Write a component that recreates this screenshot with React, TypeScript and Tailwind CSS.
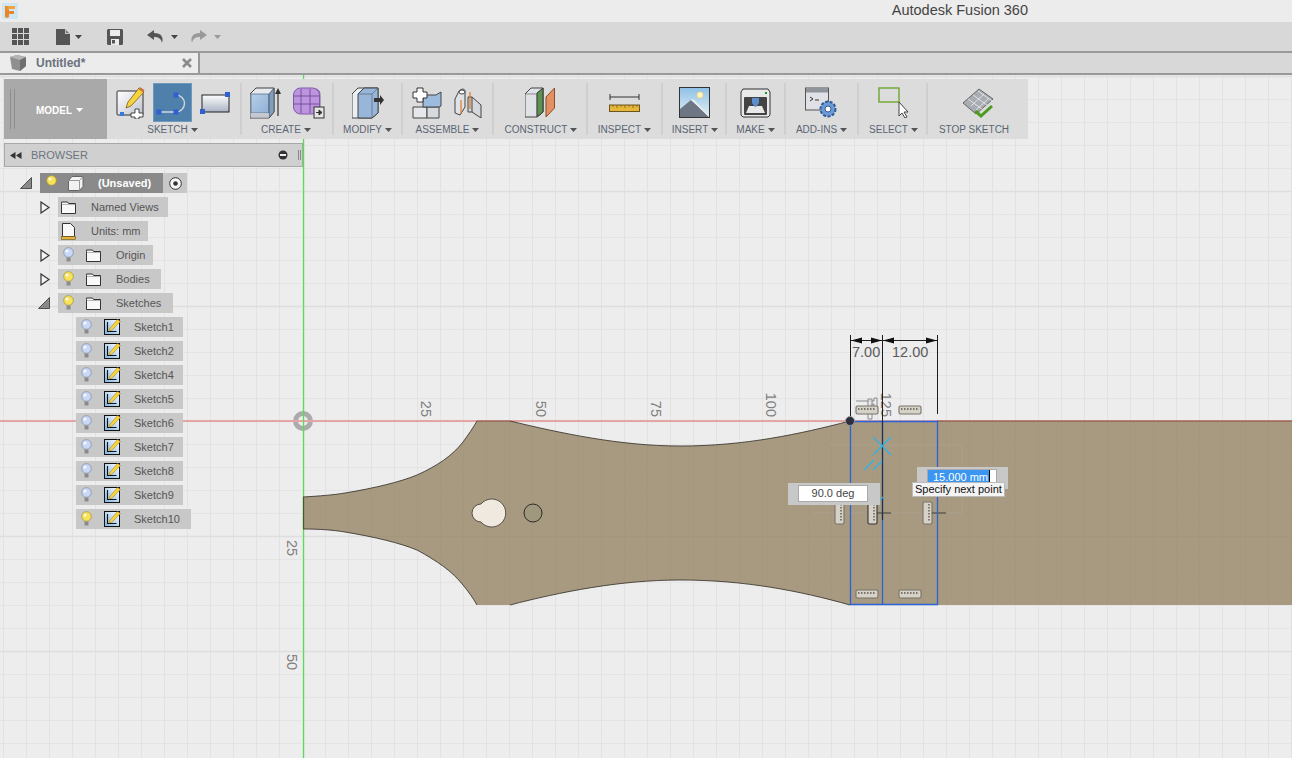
import type { ReactNode } from 'react'

const FONT = '"Liberation Sans", Arial, sans-serif'

function Caret({ color = '#555' }: { color?: string }) {
  return (
    <svg width="7" height="4" viewBox="0 0 7 4" className="inline-block shrink-0">
      <polygon points="0,0 7,0 3.5,4" fill={color} />
    </svg>
  )
}

function FusionLogo() {
  return (
    <svg width="16" height="16" viewBox="0 0 16 16">
      <rect width="16" height="16" fill="#cfe6f2" />
      <path d="M3 3h10v3H7v2h5v3H7v3l-2 1-2-1z" fill="#e8862a" />
      <path d="M5 6h8V3H6z" fill="#f2a13f" />
    </svg>
  )
}

function AppsIcon() {
  return (
    <svg width="17" height="17" viewBox="0 0 17 17" fill="#555">
      {[0, 6, 12].map((x) =>
        [0, 6, 12].map((y) => <rect key={`${x}-${y}`} x={x} y={y} width="5" height="5" />),
      )}
    </svg>
  )
}

function FileIcon() {
  return (
    <svg width="14" height="16" viewBox="0 0 14 16">
      <path d="M0 0h9l5 5v11H0z" fill="#555" />
      <path d="M9 0v5h5z" fill="#d8d8d8" />
      <path d="M9.7 1 13 4.3H9.7z" fill="#777" />
    </svg>
  )
}

function SaveIcon() {
  return (
    <svg width="16" height="16" viewBox="0 0 16 16">
      <path d="M1 0h14l1 1v14l-1 1H1l-1-1V1z" fill="#555" />
      <rect x="3" y="1" width="10" height="6" fill="#ececec" />
      <rect x="4" y="10" width="8" height="6" fill="#ececec" />
      <rect x="5" y="11" width="3" height="3.5" fill="#555" />
    </svg>
  )
}

function UndoIcon({ color, flip }: { color: string; flip?: boolean }) {
  return (
    <svg width="17" height="13" viewBox="0 0 17 13" className={flip ? '-scale-x-100' : ''}>
      <path d="M7 0 0 5l7 5V7c4 0 7 1 8 6 2-6-1-10-8-10z" fill={color} />
    </svg>
  )
}

function CreateSketchIcon() {
  return (
    <svg width="29" height="32" viewBox="0 0 29 32">
      <defs>
        <linearGradient id="paper" x1="0" y1="0" x2="1" y2="1">
          <stop offset="0" stopColor="#ffffff" />
          <stop offset="1" stopColor="#bfc3cc" />
        </linearGradient>
      </defs>
      <rect x="1" y="4" width="26" height="24" rx="1" fill="url(#paper)" stroke="#333" />
      <polygon points="23,1 28,5 15,19 10,21 12,15" fill="#f6d23c" stroke="#7a5a20" strokeWidth="0.8" />
      <polygon points="24,0 28.5,3 27,5.5 22.5,2" fill="#c8763c" />
      <rect x="4" y="25" width="4" height="4" fill="#3a78d8" />
      <path d="M19 22h4v4h4v4h-4v2h-4v-2h-4v-4h4z" fill="#fff" stroke="#333" strokeWidth="0.9" />
    </svg>
  )
}

function ArcIcon() {
  return (
    <svg width="33" height="30" viewBox="0 0 33 30">
      <path d="M3 24H20M20 7A8.5 8.5 0 0 1 20 24" fill="none" stroke="#cfd6de" strokeWidth="1.4" />
      <rect x="0.5" y="21.5" width="5" height="5" fill="#2f5fd0" />
      <rect x="17.5" y="21.5" width="5" height="5" fill="#2f5fd0" />
      <rect x="17.5" y="4.5" width="5" height="5" fill="#2f5fd0" />
    </svg>
  )
}

function RectIcon() {
  return (
    <svg width="31" height="22" viewBox="0 0 31 22">
      <defs>
        <linearGradient id="rectfill" x1="0" y1="0" x2="0" y2="1">
          <stop offset="0" stopColor="#fdfdfd" />
          <stop offset="1" stopColor="#aab2c4" />
        </linearGradient>
      </defs>
      <rect x="2" y="3" width="27" height="17" fill="url(#rectfill)" stroke="#222" />
      <rect x="25" y="0" width="5" height="5" fill="#2f5fd0" />
      <rect x="0" y="17" width="5" height="5" fill="#2f5fd0" />
    </svg>
  )
}

function ExtrudeIcon() {
  return (
    <svg width="33" height="32" viewBox="0 0 33 32">
      <defs>
        <linearGradient id="blueface" x1="0" y1="0" x2="1" y2="1">
          <stop offset="0" stopColor="#b8cfe8" />
          <stop offset="1" stopColor="#8fb0d6" />
        </linearGradient>
      </defs>
      <path d="M0 7 6 1h18v24l-5 6H0z" fill="#e6e9ee" stroke="#444" />
      <path d="M1 7h18v19H1z" fill="url(#blueface)" stroke="#567" strokeWidth="0.7" />
      <path d="M19 7l5-6v24l-5 6z" fill="#7f9dc0" stroke="#444" strokeWidth="0.7" />
      <rect x="1" y="26" width="18" height="4.5" fill="#c5c9cf" />
      <path d="M28 29V6" stroke="#333" strokeWidth="1.2" />
      <polygon points="28,1 31,7 25,7" fill="#333" />
    </svg>
  )
}

function FormIcon() {
  return (
    <svg width="32" height="32" viewBox="0 0 32 32">
      <rect x="0.5" y="1" width="26" height="26" rx="7" fill="#bd95df" stroke="#8059a8" />
      <path d="M1 9h25M1 17h25M8 2v24M17 2v24" stroke="#6d4a96" strokeWidth="0.9" fill="none" />
      <path d="M23 2c4 1 4 4 4 8v10" stroke="#8059a8" fill="none" />
      <rect x="21" y="20" width="10" height="11" fill="#e5e5e5" stroke="#333" />
      <path d="M23 25.5h4M26 23l3 2.5-3 2.5z" fill="#333" stroke="#333" />
    </svg>
  )
}

function ModifyIcon() {
  return (
    <svg width="32" height="32" viewBox="0 0 32 32">
      <path d="M0 7 6 1h20v25l-6 5H0z" fill="#eceef2" stroke="#444" />
      <path d="M6 7 12 1h14v25l-6 5H6z" fill="#97b6da" stroke="#444" />
      <path d="M20 31V7l6-6" fill="none" stroke="#567" strokeWidth="0.7" />
      <path d="M6 7h14" stroke="#567" strokeWidth="0.7" />
      <path d="M22 11h6V8l4 5-4 5v-3h-6z" fill="#333" />
    </svg>
  )
}

function NewComponentIcon() {
  return (
    <svg width="31" height="32" viewBox="0 0 31 32">
      <path d="M1 20h14v11H1z" fill="#e5e7ea" stroke="#444" />
      <path d="M15 20h12v11H15z" fill="#d6d9dd" stroke="#444" />
      <path d="M11 8h13l5-3v14l-2 1H11z" fill="#9dbbdc" stroke="#444" />
      <path d="M5 1h6v4h4v6h-4v4H5v-4H1V5h4z" fill="#fff" stroke="#333" />
    </svg>
  )
}

function JointIcon() {
  return (
    <svg width="30" height="30" viewBox="0 0 30 30">
      <path d="M2 11 6 3c3-3 6-2 6 0v16l-5 8-5-2z" fill="#dfe2e6" stroke="#444" />
      <ellipse cx="9" cy="4" rx="3" ry="2" fill="#fff" stroke="#444" />
      <path d="M15 9h4l9 8v13l-9-6h-4z" fill="#d5d8dd" stroke="#444" />
      <path d="M19 9v15" stroke="#444" />
      <path d="M8 12v14M17 4v17" stroke="#e07a24" strokeWidth="1.2" />
    </svg>
  )
}

function ConstructIcon() {
  return (
    <svg width="30" height="31" viewBox="0 0 30 31">
      <path d="M0 7 6 1h12v24l-6 5H0z" fill="#dfe2e6" stroke="#444" />
      <path d="M12 6 18 1v24l-6 5z" fill="#5d9350" stroke="#333" />
      <path d="M0 7h12v23" fill="none" stroke="#666" strokeWidth="0.7" />
      <polygon points="21,10 29.5,1 29.5,21 21,30" fill="#e39163" stroke="#8a4d28" />
    </svg>
  )
}

function InspectIcon() {
  return (
    <svg width="31" height="19" viewBox="0 0 31 19">
      <path d="M1 4h29M1 1v6M30 1v6" stroke="#333" strokeWidth="1" fill="none" />
      <rect x="0.5" y="12" width="30" height="6.5" fill="#e5b638" stroke="#6b5420" />
      <path d="M4 12v2M8 12v3M12 12v2M16 12v3M20 12v2M24 12v3M28 12v2" stroke="#6b5420" strokeWidth="0.7" />
    </svg>
  )
}

function InsertIcon() {
  return (
    <svg width="31" height="31" viewBox="0 0 31 31">
      <defs>
        <linearGradient id="sky" x1="0" y1="0" x2="0" y2="1">
          <stop offset="0" stopColor="#8ec1e6" />
          <stop offset="1" stopColor="#e6f0f4" />
        </linearGradient>
      </defs>
      <rect x="0.5" y="0.5" width="30" height="30" fill="url(#sky)" stroke="#333" />
      <circle cx="21" cy="8" r="3" fill="#fff6c0" stroke="#f2d888" />
      <path d="M1 30V22l11-9 6 5 12 12z" fill="#6e7684" />
      <path d="M12 13l2-1 16 16v2z" fill="#e8edf0" />
    </svg>
  )
}

function MakeIcon() {
  return (
    <svg width="31" height="30" viewBox="0 0 31 30">
      <path d="M3 1h25l2 3v23l-2 2H3l-2-2V4z" fill="#e9e9e9" stroke="#333" />
      <rect x="25" y="4" width="2" height="2" fill="#169a30" />
      <rect x="4" y="9" width="23" height="18" rx="1" fill="#444" />
      <path d="M6 25l3-7h13l3 7z" fill="#e8e8e8" />
      <path d="M12 10h7v5l-3 4-1 0-3-4z" fill="#5b8fd0" />
    </svg>
  )
}

function AddinsIcon() {
  return (
    <svg width="33" height="32" viewBox="0 0 33 32">
      <rect x="0.5" y="1" width="23" height="22" fill="#dfe1e6" stroke="#555" />
      <rect x="1" y="1.5" width="22" height="4" fill="#8e939c" />
      <path d="M5 10l3 2-3 2M10 13h4" stroke="#333" fill="none" />
      <circle cx="23" cy="22" r="7.5" fill="#6b9ad4" stroke="#2f5a94" strokeWidth="2" strokeDasharray="3 1.6" />
      <circle cx="23" cy="22" r="3" fill="#fff" stroke="#2f5a94" />
    </svg>
  )
}

function SelectIcon() {
  return (
    <svg width="32" height="31" viewBox="0 0 32 31" className="ml-[3px]">
      <rect x="1" y="1" width="20" height="14" fill="none" stroke="#6ea62e" strokeWidth="1.4" />
      <path d="M21 15v14l3-3 3 5 2-1-3-5h4z" fill="#fff" stroke="#444" />
    </svg>
  )
}

function StopSketchIcon() {
  return (
    <svg width="32" height="30" viewBox="0 0 32 30">
      <polygon points="1,15 17,1 31,11 14,26" fill="#a9adb3" stroke="#666" />
      <path d="M6 11l14 10M11 7l14 10M16 3l14 10M9 18l13-12M14 22l13-12" stroke="#ececec" strokeWidth="0.8" fill="none" />
      <path d="M15 22l4 4 10-9 2 2-12 11-7-6z" fill="#4d9a20" />
    </svg>
  )
}

function ToolGroup({
  label,
  width,
  last,
  gap = 'gap-[10px]',
  labelClass = '',
  children,
}: {
  label: string
  width: string
  last?: boolean
  gap?: string
  labelClass?: string
  children: ReactNode
}) {
  return (
    <div className={`${width} my-[4px] flex flex-col items-center ${last ? '' : 'border-r-2 border-[#cfcfcf]'}`}>
      <div className={`flex h-[39px] shrink-0 items-center ${gap}`}>{children}</div>
      <div className={`mt-[2px] flex h-[11px] items-center gap-[3px] text-[10px] text-[#5a6472] ${labelClass}`}>
        {label}
        {!last && <Caret />}
      </div>
    </div>
  )
}

function Toolbar() {
  return (
    <div className="absolute left-[4px] top-[4px] flex h-[60px] w-[1024px] bg-[#dcdcdc]">
      <div className="flex w-[103px] items-center bg-[#a9a9a9] pl-[6px]">
        <div className="h-[40px] w-[5px] border-x border-[#8e8e8e]" />
        <div className="ml-[21px] mt-[2px] flex items-center gap-[4px] text-[10px] font-bold text-white">
          MODEL
          <Caret color="#fff" />
        </div>
      </div>
      <ToolGroup label="SKETCH" width="w-[135px]" gap="gap-[8px]" labelClass="-ml-[2px]">
        <CreateSketchIcon />
        <div className="flex h-[39px] w-[39px] items-center justify-center border border-[#6f98bd] bg-[#4f80ac]">
          <ArcIcon />
        </div>
        <RectIcon />
      </ToolGroup>
      <ToolGroup label="CREATE" width="w-[92px]" labelClass="-ml-[2px]">
        <ExtrudeIcon />
        <FormIcon />
      </ToolGroup>
      <ToolGroup label="MODIFY" width="w-[69px]">
        <ModifyIcon />
      </ToolGroup>
      <ToolGroup label="ASSEMBLE" width="w-[91px]">
        <NewComponentIcon />
        <JointIcon />
      </ToolGroup>
      <ToolGroup label="CONSTRUCT" width="w-[94px]" labelClass="ml-[2px]">
        <ConstructIcon />
      </ToolGroup>
      <ToolGroup label="INSPECT" width="w-[75px]">
        <InspectIcon />
      </ToolGroup>
      <ToolGroup label="INSERT" width="w-[64px]" labelClass="ml-[2px]">
        <InsertIcon />
      </ToolGroup>
      <ToolGroup label="MAKE" width="w-[59px]">
        <MakeIcon />
      </ToolGroup>
      <ToolGroup label="ADD-INS" width="w-[73px]">
        <AddinsIcon />
      </ToolGroup>
      <ToolGroup label="SELECT" width="w-[69px]" labelClass="ml-[2px]">
        <SelectIcon />
      </ToolGroup>
      <ToolGroup label="STOP SKETCH" width="w-[100px]" last labelClass="-ml-[8px]">
        <StopSketchIcon />
      </ToolGroup>
    </div>
  )
}

function Bulb({ on }: { on?: boolean }) {
  return (
    <svg width="11" height="16" viewBox="0 0 11 16" className="shrink-0">
      <circle cx="5.5" cy="5.5" r="4.8" fill={on ? '#f8e25a' : '#c9d8f4'} stroke={on ? '#a8963a' : '#7f8fb0'} strokeWidth="0.8" />
      <circle cx="4" cy="4" r="1.6" fill="#fff" opacity="0.8" />
      <rect x="3.5" y="10.5" width="4" height="4" fill="#8b8b8b" />
    </svg>
  )
}

function FolderIcon() {
  return (
    <svg width="15" height="13" viewBox="0 0 15 13" className="shrink-0">
      <path d="M0.5 2.5V1h6l1 1.5h7v10h-14z" fill="#f8f8f8" stroke="#333" />
      <path d="M0.5 3.5h14" stroke="#888" strokeWidth="0.6" />
    </svg>
  )
}

function UnitsIcon() {
  return (
    <svg width="15" height="17" viewBox="0 0 15 17" className="shrink-0">
      <path d="M1.5 0.5h8l4 4v9h-12z" fill="#f8f8f8" stroke="#333" />
      <rect x="0.5" y="13.5" width="14" height="3" fill="#e2b23a" stroke="#6b5420" strokeWidth="0.6" />
    </svg>
  )
}

function SketchIcon() {
  return (
    <svg width="17" height="16" viewBox="0 0 17 16" className="shrink-0">
      <defs>
        <linearGradient id="skbg" x1="0" y1="1" x2="1" y2="0">
          <stop offset="0" stopColor="#7fb2e4" />
          <stop offset="1" stopColor="#ffffff" />
        </linearGradient>
      </defs>
      <rect x="0.5" y="0.5" width="15" height="15" fill="url(#skbg)" stroke="#111" />
      <path d="M3.5 3v9.5h9" fill="none" stroke="#111" strokeWidth="1.1" />
      <polygon points="13.5,0.5 16.5,2.5 8,11 5,12 6,9" fill="#f6d23c" stroke="#9a7a20" strokeWidth="0.5" />
    </svg>
  )
}

function ClosedArrow() {
  return (
    <svg width="10" height="13" viewBox="0 0 10 13">
      <polygon points="1,1 9,6.5 1,12" fill="#f4f4f4" stroke="#333" strokeWidth="1.2" />
    </svg>
  )
}

function OpenArrow() {
  return (
    <svg width="12" height="12" viewBox="0 0 12 12">
      <polygon points="11.5,0.5 11.5,11.5 0.5,11.5" fill="#8a8a8a" stroke="#333" strokeWidth="0.8" />
    </svg>
  )
}

type NodeRow = { label: string; width: string; bulb?: 'on' | 'off'; icon: 'folder' | 'units'; arrow?: 'open' | 'closed' }

const topRows: NodeRow[] = [
  { label: 'Named Views', width: 'w-[110px]', icon: 'folder', arrow: 'closed' },
  { label: 'Units: mm', width: 'w-[90px]', icon: 'units' },
  { label: 'Origin', width: 'w-[95px]', icon: 'folder', bulb: 'off', arrow: 'closed' },
  { label: 'Bodies', width: 'w-[103px]', icon: 'folder', bulb: 'on', arrow: 'closed' },
  { label: 'Sketches', width: 'w-[115px]', icon: 'folder', bulb: 'on', arrow: 'open' },
]

const sketches = ['Sketch1', 'Sketch2', 'Sketch4', 'Sketch5', 'Sketch6', 'Sketch7', 'Sketch8', 'Sketch9', 'Sketch10']

function BrowserPanel() {
  return (
    <div className="absolute left-[4px] top-[68px] flex w-[299px] flex-col text-[11px] text-[#555]">
      <div className="flex h-[24px] items-center border border-[#a8a8a8] bg-[#d0d0d0] pl-[5px] pr-[1px]">
        <svg width="12" height="7" viewBox="0 0 12 7" fill="#333">
          <polygon points="5.5,0 5.5,7 0,3.5" />
          <polygon points="11.5,0 11.5,7 6,3.5" />
        </svg>
        <span className="ml-[9px] text-[#6b7480]">BROWSER</span>
        <svg width="10" height="10" viewBox="0 0 10 10" className="ml-auto mr-[10px]">
          <circle cx="5" cy="5" r="4.5" fill="#333" />
          <rect x="2" y="4" width="6" height="2" fill="#eee" />
        </svg>
        <div className="h-[10px] w-[3px] border-x border-[#888]" />
      </div>
      <div className="mt-[6px] flex flex-col gap-[4px]">
        <div className="flex h-[20px] items-center">
          <div className="ml-[16px] w-[20px]">
            <OpenArrow />
          </div>
          <div className="flex h-[20px] bg-[#c8c8c8]">
            <div className="flex w-[123px] items-center bg-[#8a8a8a] pl-[6px]">
              <Bulb on />
              <svg width="16" height="15" viewBox="0 0 16 15" className="ml-[11px]">
                <path d="M0.5 4.5 4 0.5h11v10l-3.5 4h-11z" fill="#f2f2f2" stroke="#666" />
                <path d="M0.5 4.5h11v10M11.5 4.5l3.5-4" fill="none" stroke="#999" />
              </svg>
              <span className="ml-[14px] font-bold text-white">(Unsaved)</span>
            </div>
            <div className="flex w-[24px] items-center justify-center">
              <svg width="13" height="13" viewBox="0 0 13 13">
                <circle cx="6.5" cy="6.5" r="5.8" fill="#f6f6f6" stroke="#333" />
                <circle cx="6.5" cy="6.5" r="2.3" fill="#333" />
              </svg>
            </div>
          </div>
        </div>
        {topRows.map((row) => (
          <div key={row.label} className="flex h-[20px] items-center">
            <div className={`${row.arrow === 'open' ? 'ml-[34px] w-[20px]' : 'ml-[36px] w-[18px]'} flex items-center`}>
              {row.arrow === 'closed' && <ClosedArrow />}
              {row.arrow === 'open' && <OpenArrow />}
            </div>
            <div className={`flex h-[20px] items-center bg-[#c8c8c8] ${row.width} ${row.bulb ? 'pl-[5px]' : 'pl-[3px]'}`}>
              {row.bulb && <Bulb on={row.bulb === 'on'} />}
              <div className={row.bulb ? 'ml-[12px]' : ''}>{row.icon === 'folder' ? <FolderIcon /> : <UnitsIcon />}</div>
              <span className="ml-[15px]">{row.label}</span>
            </div>
          </div>
        ))}
        {sketches.map((name) => (
          <div
            key={name}
            className={`ml-[72px] flex h-[20px] items-center bg-[#c8c8c8] pl-[5px] ${name === 'Sketch10' ? 'w-[115px]' : 'w-[107px]'}`}
          >
            <Bulb on={name === 'Sketch10'} />
            <div className="ml-[12px]">
              <SketchIcon />
            </div>
            <span className="ml-[13px]">{name}</span>
          </div>
        ))}
      </div>
    </div>
  )
}

function HRuler({ x, y }: { x: number; y: number }) {
  return (
    <g>
      <rect x={x} y={y} width="22" height="8" rx="1.5" fill="#d6d2c8" stroke="#77726a" strokeWidth="1.1" />
      <path d={`M${x + 2} ${y + 3}h18`} stroke="#77726a" strokeWidth="1.8" strokeDasharray="1.5 1.5" />
    </g>
  )
}

function VRuler({ x, y, dark }: { x: number; y: number; dark?: boolean }) {
  return (
    <g>
      <rect x={x} y={y} width="9" height="22" rx="1.5" fill="#d6d2c8" stroke={dark ? '#333' : '#77726a'} strokeWidth="1.1" />
      <path d={`M${x + 6} ${y + 2}v18`} stroke="#77726a" strokeWidth="1.8" strokeDasharray="1.5 1.5" />
    </g>
  )
}

function AxisLabel({ x, y, text, anchor }: { x: number; y: number; text: string; anchor: 'start' | 'end' }) {
  return (
    <text x={x} y={y} textAnchor={anchor} fontSize="14.5" fill="#808080" fontFamily={FONT} transform={`rotate(90 ${x} ${y})`}>
      {text}
    </text>
  )
}

const OUTLINE =
  'M303 497C320 496 333 495 345 493C375 488 400 482 417 475C437 466 452 456 463 442C468 435 473 428 477 421H510C560 433 620 446 680 446C745 446 800 434 850 421H1292V605H850C800 591 745 580 680 580C620 580 560 592 510 605H477C473 598 468 591 463 585C452 571 437 561 417 550C400 543 375 537 345 532C333 530 320 529 303 529Z'

function Drawing() {
  const vertical = Array.from({ length: 58 }, (_, i) => 3 + i * 23)
  const horizontal = Array.from({ length: 30 }, (_, i) => 76 + i * 23)
  return (
    <svg className="absolute inset-0" width="1292" height="683" viewBox="0 75 1292 683">
      {vertical.map((x) => (
        <line
          key={x}
          x1={x + 0.5}
          x2={x + 0.5}
          y1="75"
          y2="758"
          stroke={(x - 303) % 115 === 0 ? '#dadada' : '#e2e2e2'}
          strokeWidth={(x - 303) % 115 === 0 ? 1.5 : 1}
        />
      ))}
      {horizontal.map((y) => (
        <line
          key={y}
          x1="0"
          x2="1292"
          y1={y + 0.5}
          y2={y + 0.5}
          stroke={(y - 421) % 115 === 0 ? '#dedede' : '#e4e4e4'}
          strokeWidth={(y - 421) % 115 === 0 ? 1.5 : 1}
        />
      ))}

      <circle cx="303" cy="421" r="7.5" fill="none" stroke="#ababab" strokeWidth="5" />
      <line x1="0" x2="1292" y1="421" y2="421" stroke="#e6a5a5" strokeWidth="2" />
      <rect x="303" y="75" width="1.2" height="683" fill="#52df52" />

      <path d={OUTLINE} fill="#90805e" fillOpacity="0.76" />
      <path
        d="M303 497C320 496 333 495 345 493C375 488 400 482 417 475C437 466 452 456 463 442C468 435 473 428 477 421M510 421C560 433 620 446 680 446C745 446 800 434 850 421M850 605C800 591 745 580 680 580C620 580 560 592 510 605M477 605C473 598 468 591 463 585C452 571 437 561 417 550C400 543 375 537 345 532C333 530 320 529 303 529"
        fill="none"
        stroke="#2e2a22"
        strokeWidth="0.8"
      />
      <line x1="477" x2="510" y1="421" y2="421" stroke="#8d5a4a" />
      <line x1="937" x2="1292" y1="421" y2="421" stroke="#8d5a4a" />
      <line x1="303.5" x2="303.5" y1="497" y2="529" stroke="#2f6b14" strokeWidth="1.2" />

      <path d="M481 504A14 14 0 1 1 481 522A6.5 6.5 0 0 1 481 504Z" fill="#f0e9df" stroke="#3a352b" strokeWidth="0.8" />
      <circle cx="533" cy="513" r="9" fill="#a0977f" stroke="#2e2a22" strokeWidth="1" />

      <AxisLabel x={421} y={417} text="25" anchor="end" />
      <AxisLabel x={536} y={417} text="50" anchor="end" />
      <AxisLabel x={651} y={417} text="75" anchor="end" />
      <AxisLabel x={766} y={417} text="100" anchor="end" />
      <AxisLabel x={881} y={417} text="125" anchor="end" />
      <AxisLabel x={287} y={540} text="25" anchor="start" />
      <AxisLabel x={287} y={654} text="50" anchor="start" />

      <path d="M813 513H962V445H830" fill="none" stroke="#bbb" strokeOpacity="0.25" />

      <path d="M850.5 335V421M882.5 335V421M937.5 335V414" stroke="#1d1d1d" strokeWidth="1" />
      <path d="M851 340.5H937" stroke="#222" strokeWidth="1" />
      <polygon points="851,340.5 862,337.5 862,343.5" fill="#111" />
      <polygon points="882,340.5 871,337.5 871,343.5" fill="#111" />
      <polygon points="883,340.5 894,337.5 894,343.5" fill="#111" />
      <polygon points="937,340.5 926,337.5 926,343.5" fill="#111" />
      <text x="852" y="357" fontSize="14.5" fill="#5a5a5a" fontFamily={FONT}>
        7.00
      </text>
      <text x="892" y="357" fontSize="14.5" fill="#5a5a5a" fontFamily={FONT}>
        12.00
      </text>

      <path d="M856 401h18v-3h3v10h-3v-4h-3v4h-10" fill="#ececec" fillOpacity="0.6" stroke="#8a8a8a" />
      <path d="M868 399h4v20h-4z" fill="#ececec" fillOpacity="0.6" stroke="#8a8a8a" />
      <HRuler x={856} y={406} />
      <HRuler x={899} y={406} />
      <HRuler x={856} y={590} />
      <HRuler x={899} y={590} />
      <VRuler x={835} y={502} />
      <VRuler x={868} y={502} dark />
      <VRuler x={923} y={502} />
      <path d="M877 513h14M932 513h14" stroke="#3d3a33" />

      <path d="M850.5 421V605M937.5 421V605M850 421.5H938M850 604.5H938" fill="none" stroke="#2a62d8" strokeWidth="1.3" />
      <path d="M882.5 421V520" stroke="#14315f" strokeWidth="1.3" />
      <path d="M882.5 520V605" stroke="#2a62d8" strokeWidth="1.3" />
      <path d="M873 437l18 18M891 437l-18 18M864 470l10-10M873 470l9-9M877 503l6-6" stroke="#2fb4ea" strokeWidth="1.2" />
      <circle cx="850" cy="421" r="4.5" fill="#2c2f3c" stroke="#999" strokeWidth="1" />
    </svg>
  )
}

function DimensionInputs() {
  return (
    <>
      <div className="absolute left-[788px] top-[408px] flex h-[22px] w-[92px] bg-[#c8c8c8] pl-[10px] pt-[2px]">
        <div className="flex h-[17px] w-[70px] items-center justify-center border border-[#aaa] bg-white text-[11px] text-[#444]">
          90.0 deg
        </div>
      </div>
      <div className="absolute left-[917px] top-[392px] flex h-[22px] w-[91px] bg-[#c8c8c8] pl-[10px] pt-[2px]">
        <div className="flex h-[17px] w-[70px] border border-[#aaa] bg-white">
          <div className="flex w-[61px] justify-end bg-[#3a96f0] pr-[1px] text-[11px] leading-[15px] text-white">15.000 mm</div>
          <div className="w-[1px] bg-black" />
        </div>
      </div>
      <div className="absolute left-[912px] top-[407px] flex h-[15px] items-center whitespace-nowrap border border-[#bbb] bg-[#f4f4f4] px-[2px] text-[11px] text-[#111]">
        Specify next point
      </div>
    </>
  )
}

export default function App() {
  return (
    <div className="flex h-[758px] w-[1292px] flex-col overflow-hidden bg-[#ededed]" style={{ fontFamily: FONT }}>
      <div className="relative flex h-[22px] items-center justify-end bg-[#ececec] pr-[264px] text-[14.5px] text-[#444]">
        <div className="absolute left-[2px] top-[3px]">
          <FusionLogo />
        </div>
        Autodesk Fusion 360
      </div>

      <div className="flex h-[31px] items-center border-b-2 border-[#999] bg-[#d8d8d8] pl-[12px]">
        <AppsIcon />
        <div className="ml-[27px] flex items-center gap-[3px]">
          <FileIcon />
          <span className="ml-[2px] flex">
            <Caret color="#444" />
          </span>
        </div>
        <div className="ml-[25px]">
          <SaveIcon />
        </div>
        <div className="ml-[24px] flex items-center gap-[7px]">
          <UndoIcon color="#555" />
          <Caret color="#444" />
        </div>
        <div className="ml-[12px] flex items-center gap-[7px]">
          <UndoIcon color="#999" flip />
          <Caret color="#999" />
        </div>
      </div>

      <div className="flex h-[22px] border-b-2 border-[#999] bg-[#d8d8d8]">
        <div className="flex w-[200px] items-center border-r-2 border-[#999] bg-[#ececec] pl-[10px]">
          <svg width="17" height="17" viewBox="0 0 17 17">
            <path d="M0 2 7 0l9 2v9l-6 5-8-2z" fill="#8f8f8f" />
            <path d="M0 2l10 3 6-3-9-2z" fill="#b5b5b5" />
            <path d="M10 5v11l6-5V2z" fill="#6f6f6f" />
          </svg>
          <span className="ml-[9px] text-[12px] font-bold text-[#6b7280]">Untitled*</span>
          <svg width="10" height="10" viewBox="0 0 10 10" className="ml-[97px]">
            <path d="M1 1l8 8M9 1l-8 8" stroke="#8a8a8a" strokeWidth="2.5" />
          </svg>
        </div>
      </div>

      <div className="relative flex-1">
        <Drawing />
        <Toolbar />
        <BrowserPanel />
        <DimensionInputs />
      </div>
    </div>
  )
}
